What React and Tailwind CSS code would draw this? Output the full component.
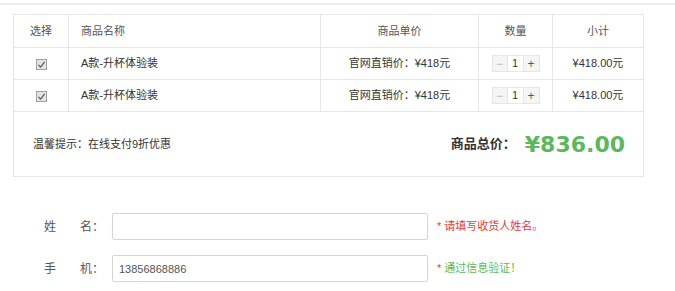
export default function App() {
  const rows = [1, 2];
  return (
    <div className="min-h-[291px] bg-white text-[11px] text-[#333]" style={{ fontFamily: '"Liberation Sans", "Noto Sans CJK SC", sans-serif' }}>
      {/* top rule */}
      <div className="pt-[3px]">
        <div className="h-[2px] border-t border-b border-[#ececec] bg-[#f7f7f7]" />
      </div>

      {/* Cart table */}
      <div className="ml-[13px] mt-[9px] w-[631px]">
        <table className="w-full border-collapse border border-[#e6e6e6]">
          <thead>
            <tr className="h-[33px] text-[#555]">
              <th className="w-[55px] border border-[#e6e6e6] font-normal">选择</th>
              <th className="w-[252px] border border-[#e6e6e6] pl-[12px] text-left font-normal">商品名称</th>
              <th className="w-[158px] border border-[#e6e6e6] font-normal">商品单价</th>
              <th className="w-[74px] border border-[#e6e6e6] font-normal">数量</th>
              <th className="border border-[#e6e6e6] font-normal">小计</th>
            </tr>
          </thead>
          <tbody>
            {rows.map((id) => (
              <tr key={id} className="h-[32px]">
                <td className="border border-[#e6e6e6] text-center">
                  <span className="inline-flex h-[11px] w-[11px] items-center justify-center border border-[#a0a0a0] bg-[#e4e4e4] align-middle">
                    <svg width="9" height="9" viewBox="0 0 9 9">
                      <path d="M1.5 4.8 L3.6 7 L7.6 1.8" fill="none" stroke="#555" strokeWidth="1.2" />
                    </svg>
                  </span>
                </td>
                <td className="border border-[#e6e6e6] pl-[12px]">A款-升杯体验装</td>
                <td className="border border-[#e6e6e6] text-center">官网直销价：¥418元</td>
                <td className="border border-[#e6e6e6]">
                  <div className="mx-auto flex h-[17px] w-[48px] border border-[#e6e6e6] text-[12px] leading-none">
                    <span className="flex w-[15px] items-center justify-center border-r border-[#e6e6e6] bg-[#f5f5f5] text-[#bbb]">−</span>
                    <span className="flex flex-1 items-center justify-center bg-white text-[11px] text-[#333]">1</span>
                    <span className="flex w-[16px] items-center justify-center border-l border-[#e6e6e6] bg-[#f5f5f5] text-[#555]">+</span>
                  </div>
                </td>
                <td className="border border-[#e6e6e6] text-center">¥418.00元</td>
              </tr>
            ))}
            <tr className="h-[65px]">
              <td colSpan={5} className="border border-[#e6e6e6]">
                <div className="flex items-center justify-between pl-[19px] pr-[18px]">
                  <span>温馨提示：在线支付9折优惠</span>
                  <div className="flex items-center gap-[9px]">
                    <span className="text-[13px] font-bold text-[#333]">商品总价：</span>
                    <span className="text-[22px] font-bold text-[#5cb85c]" style={{ fontFamily: '"DejaVu Sans", sans-serif' }}>¥836.00</span>
                  </div>
                </div>
              </td>
            </tr>
          </tbody>
        </table>
      </div>

      {/* Form */}
      <div className="mt-[36px] flex flex-col gap-[15px] text-[12px] text-[#555]">
        <div className="flex items-center">
          <span className="ml-[44px] w-[36px]">姓</span>
          <span className="w-[32px]">名：</span>
          <input className="h-[27px] w-[316px] rounded-[2px] border border-[#d5d5d5] px-[6px] text-[11px] outline-none" />
          <span className="ml-[9px] text-[11px] text-[#e4393c]">
            <span className="mr-[3px]">*</span>请填写收货人姓名。
          </span>
        </div>
        <div className="flex items-center">
          <span className="ml-[44px] w-[36px]">手</span>
          <span className="w-[32px]">机：</span>
          <input defaultValue="13856868886" className="h-[27px] w-[316px] rounded-[2px] border border-[#d5d5d5] px-[6px] text-[11px] text-[#555] outline-none" />
          <span className="ml-[9px] text-[11px] text-[#5cb85c]">
            <span className="mr-[3px] text-[#e4393c]">*</span>通过信息验证！
          </span>
        </div>
      </div>
    </div>
  );
}
